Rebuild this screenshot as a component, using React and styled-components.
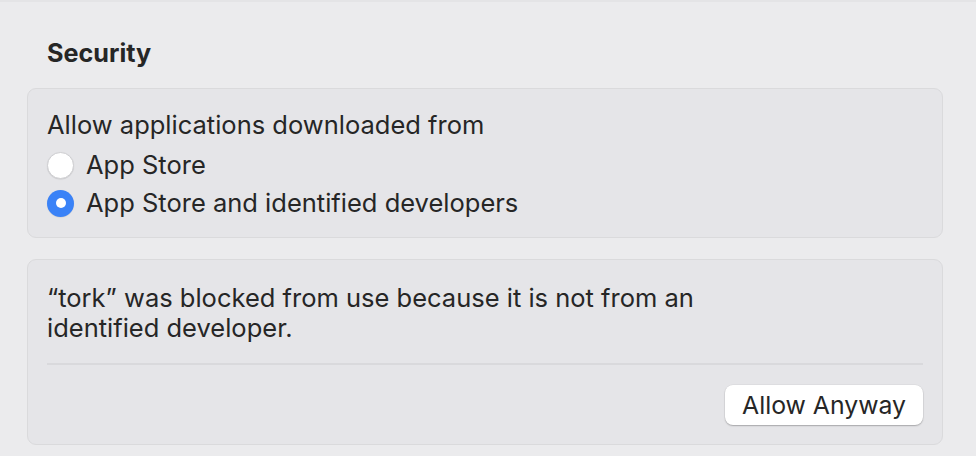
import styled, { createGlobalStyle } from 'styled-components';

const GlobalStyle = createGlobalStyle`
  html, body {
    margin: 0;
    padding: 0;
    background: #ebebed;
  }
  body {
    font-family: Inter, "Noto Sans", "Liberation Sans", sans-serif;
    color: #262626;
    -webkit-font-smoothing: antialiased;
  }
`;

const Page = styled.div`
  width: 976px;
  height: 456px;
  box-sizing: border-box;
  padding: 35px 33px 0 27px;
  display: flex;
  flex-direction: column;
  border-top: 2px solid #e4e4e6;
`;

const Heading = styled.h2`
  margin: 0 0 18px 20px;
  font-size: 25.2px;
  font-weight: 700;
  line-height: 33px;
  color: #262626;
`;

const Group = styled.section`
  background: #e5e5e8;
  border: 1px solid #dadadc;
  border-radius: 9px;
  padding: ${p => p.$pad || '20px 19px'};
  margin-bottom: ${p => p.$gap || '0'};
  display: flex;
  flex-direction: column;
`;

const Label = styled.div`
  font-size: 25.5px;
  line-height: 38px;
  margin-bottom: 2px;
`;

const RadioRow = styled.label`
  display: flex;
  align-items: center;
  gap: 12px;
  font-size: 25.5px;
  line-height: 38px;
`;

const Radio = styled.span`
  width: 27px;
  height: 27px;
  border-radius: 50%;
  box-sizing: border-box;
  flex: none;
  display: flex;
  align-items: center;
  justify-content: center;
  background: ${p => (p.$on ? '#3a82f7' : '#ffffff')};
  border: ${p => (p.$on ? 'none' : '1px solid #cfcfd2')};
  box-shadow: 0 0.5px 1px rgba(0, 0, 0, 0.12);

  &::after {
    content: '';
    display: ${p => (p.$on ? 'block' : 'none')};
    width: 10px;
    height: 10px;
    border-radius: 50%;
    background: #ffffff;
  }
`;

const Message = styled.p`
  margin: 0;
  font-size: 25.5px;
  line-height: 30px;
  max-width: 700px;
`;

const Divider = styled.hr`
  border: none;
  height: 2px;
  background: #d9d9dc;
  margin: 20px 0 20px;
`;

const Actions = styled.div`
  display: flex;
  justify-content: flex-end;
`;

const Button = styled.button`
  font-family: inherit;
  font-size: 24.8px;
  color: #262626;
  background: #ffffff;
  border: none;
  border-radius: 8px;
  height: 40px;
  padding: 0 17px;
  box-shadow: 0 1px 1.5px rgba(0, 0, 0, 0.25), 0 0 0 0.5px rgba(0, 0, 0, 0.06);
`;

export default function App() {
  return (
    <>
      <GlobalStyle />
      <Page>
        <Heading>Security</Heading>
        <Group $pad="17px 19px 15px" $gap="21px">
          <Label>Allow applications downloaded from</Label>
          <RadioRow>
            <Radio />
            App Store
          </RadioRow>
          <RadioRow>
            <Radio $on />
            App Store and identified developers
          </RadioRow>
        </Group>
        <Group $pad="23px 19px 19px">
          <Message>“tork” was blocked from use because it is not from an identified developer.</Message>
          <Divider />
          <Actions>
            <Button>Allow Anyway</Button>
          </Actions>
        </Group>
      </Page>
    </>
  );
}
